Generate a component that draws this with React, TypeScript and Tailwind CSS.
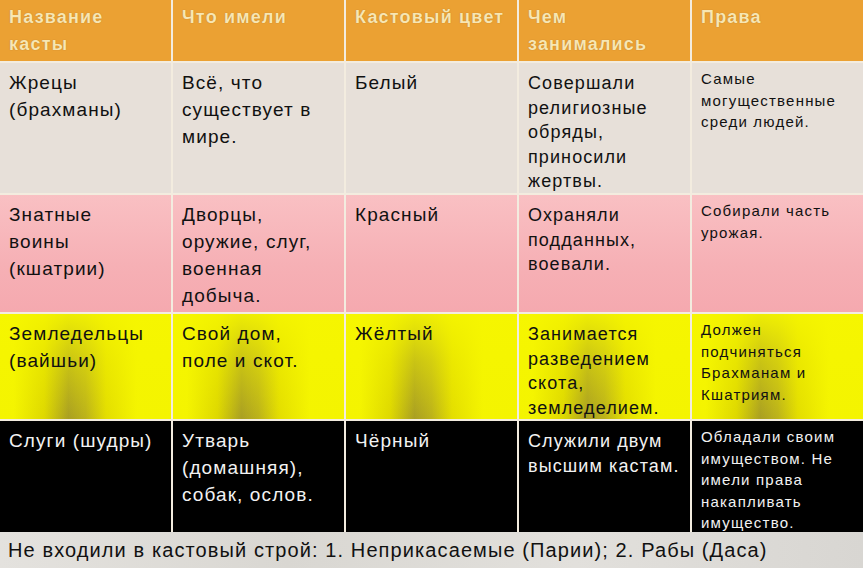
const font = "font-['Liberation_Sans',Arial,sans-serif]";

const headers = ["Название касты", "Что имели", "Кастовый цвет", "Чем занимались", "Права"];

type Row = {
  cells: string[];
  h: string;
  bg: string;
  text: string;
};

const yellow =
  "bg-[linear-gradient(to_bottom,rgba(246,246,0,0.9)_0%,rgba(246,246,0,0.45)_45%,rgba(246,246,0,0.05)_100%),linear-gradient(to_right,#f4f400_8%,#dcd600_26%,#a59a24_40%,#b8ae1c_50%,#e2dc00_62%,#f4f400_80%)]";

const rows: Row[] = [
  {
    cells: [
      "Жрецы (брахманы)",
      "Всё, что существует в мире.",
      "Белый",
      "Совершали религиозные обряды, приносили жертвы.",
      "Самые могущественные среди людей.",
    ],
    h: "h-[130px]",
    bg: "bg-[#e7e0d9]",
    text: "text-[#111]",
  },
  {
    cells: [
      "Знатные воины (кшатрии)",
      "Дворцы, оружие, слуг, военная добыча.",
      "Красный",
      "Охраняли подданных, воевали.",
      "Собирали часть урожая.",
    ],
    h: "h-[117px]",
    bg: "bg-[linear-gradient(to_bottom,#f9c0c3,#f6b0b5_60%,#f5a9af)]",
    text: "text-[#111]",
  },
  {
    cells: [
      "Земледельцы (вайшьи)",
      "Свой дом, поле и скот.",
      "Жёлтый",
      "Занимается разведением скота, земледелием.",
      "Должен подчиняться Брахманам и Кшатриям.",
    ],
    h: "h-[105px]",
    bg: yellow,
    text: "text-[#111]",
  },
  {
    cells: [
      "Слуги (шудры)",
      "Утварь (домашняя), собак, ослов.",
      "Чёрный",
      "Служили двум высшим кастам.",
      "Обладали своим имуществом. Не имели права накапливать имущество.",
    ],
    h: "h-[111px]",
    bg: "bg-black",
    text: "text-[#f2f2f2]",
  },
];

function cellText(i: number) {
  if (i === 4) return "text-[15px] leading-[21.5px] tracking-[1.2px] pt-[5px] pl-[9px] pr-[4px]";
  if (i === 3) return "text-[18px] leading-[24.5px] tracking-[1.1px] pt-[8px] pl-[9px] pr-[2px]";
  return "text-[19px] leading-[27px] tracking-[1.1px] pt-[6px] pl-[9px] pr-[14px]";
}

export default function App() {
  return (
    <div className={`w-[863px] h-[568px] overflow-hidden bg-[#dedcd8] ${font}`}>
      <div className="grid grid-cols-5 gap-[2px] bg-[#f3ecdf]">
        {headers.map((h) => (
          <div
            key={h}
            className="h-[61px] bg-[#eba133] pl-[9px] pr-[6px] pt-[4px] text-[18px] font-bold leading-[27px] tracking-[1.2px] text-[#f8e6b2] [text-shadow:0_0_1px_#a8702a]"
          >
            {h}
          </div>
        ))}
        {rows.map((row, r) =>
          row.cells.map((c, i) => (
            <div key={`${r}-${i}`} className={`${row.h} ${row.bg} ${row.text} ${cellText(i)}`}>
              {c}
            </div>
          ))
        )}
      </div>
      <div className="h-[36px] pl-[8px] pt-[4px] text-[20px] leading-[28px] tracking-[1.1px] text-[#111] bg-[linear-gradient(to_right,#e4e2de,#d9d7d2,#e2e0dc,#d8d6d2)]">
        Не входили в кастовый строй: 1. Неприкасаемые (Парии); 2. Рабы (Даса)
      </div>
    </div>
  );
}
